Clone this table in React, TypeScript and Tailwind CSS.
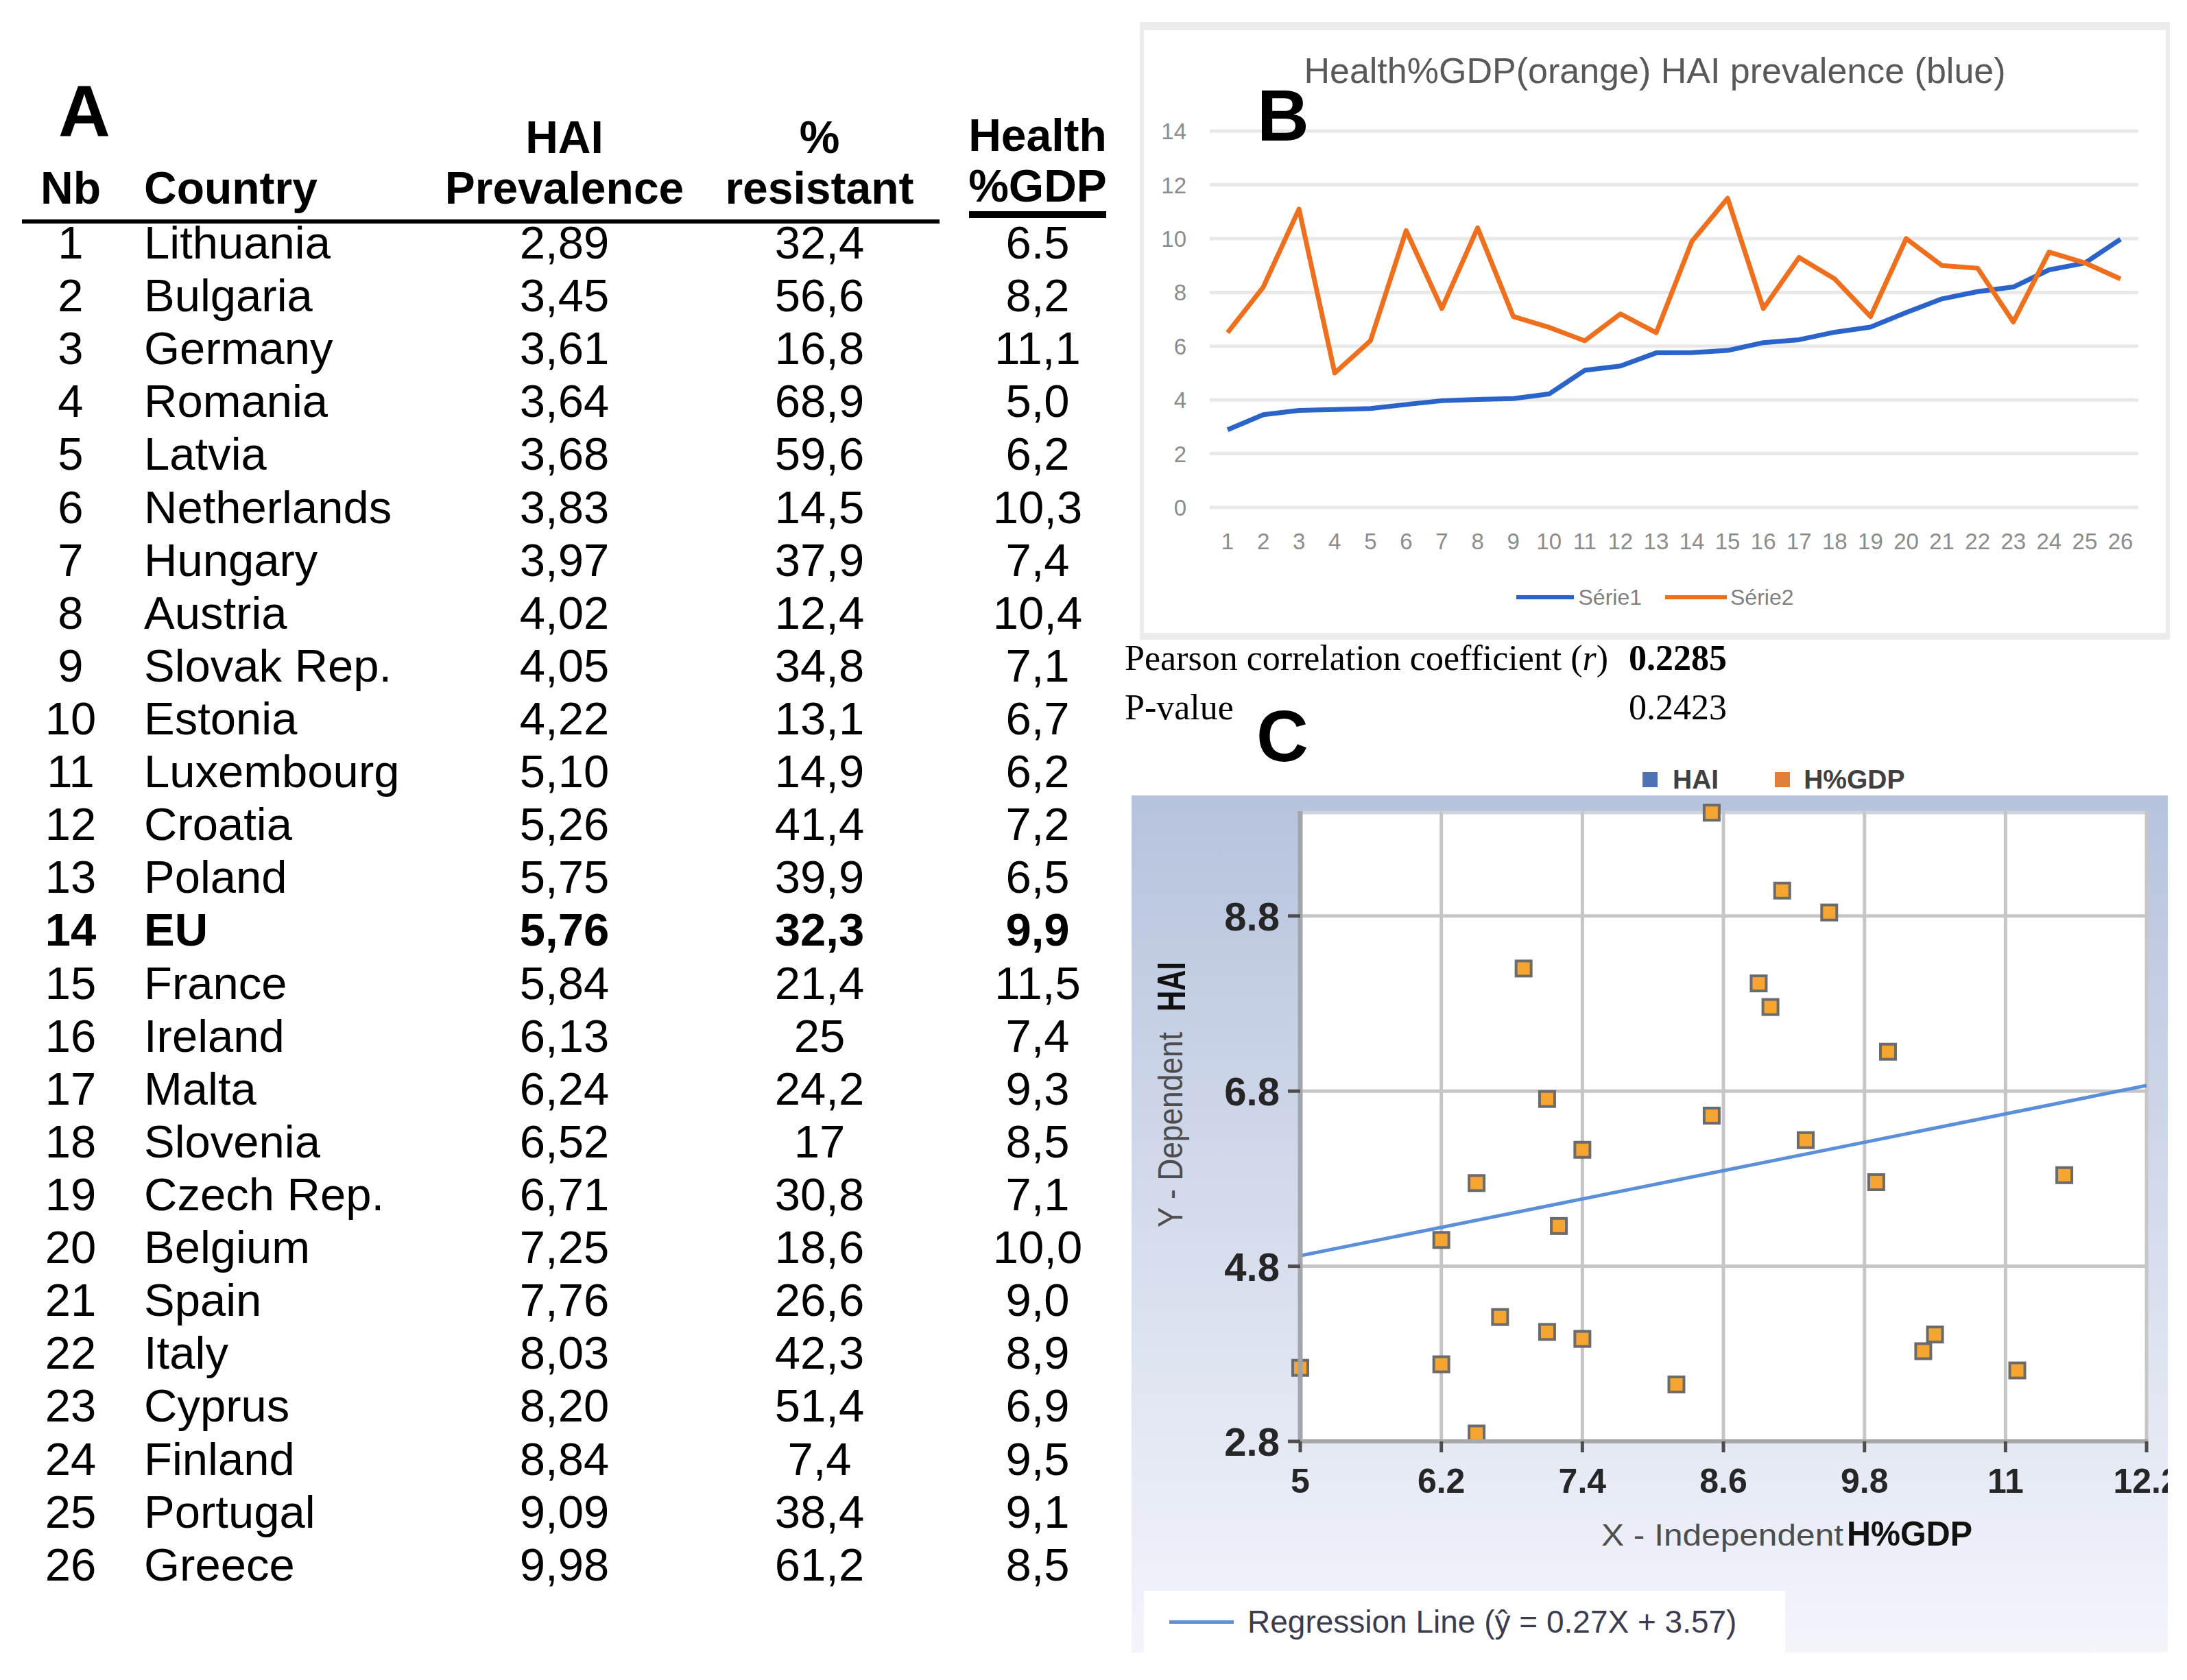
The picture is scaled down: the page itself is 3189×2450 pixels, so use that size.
import React from 'react';

type Row = [number, string, string, string, string];

const rows: Row[] = [
  [1, 'Lithuania', '2,89', '32,4', '6.5'],
  [2, 'Bulgaria', '3,45', '56,6', '8,2'],
  [3, 'Germany', '3,61', '16,8', '11,1'],
  [4, 'Romania', '3,64', '68,9', '5,0'],
  [5, 'Latvia', '3,68', '59,6', '6,2'],
  [6, 'Netherlands', '3,83', '14,5', '10,3'],
  [7, 'Hungary', '3,97', '37,9', '7,4'],
  [8, 'Austria', '4,02', '12,4', '10,4'],
  [9, 'Slovak Rep.', '4,05', '34,8', '7,1'],
  [10, 'Estonia', '4,22', '13,1', '6,7'],
  [11, 'Luxembourg', '5,10', '14,9', '6,2'],
  [12, 'Croatia', '5,26', '41,4', '7,2'],
  [13, 'Poland', '5,75', '39,9', '6,5'],
  [14, 'EU', '5,76', '32,3', '9,9'],
  [15, 'France', '5,84', '21,4', '11,5'],
  [16, 'Ireland', '6,13', '25', '7,4'],
  [17, 'Malta', '6,24', '24,2', '9,3'],
  [18, 'Slovenia', '6,52', '17', '8,5'],
  [19, 'Czech Rep.', '6,71', '30,8', '7,1'],
  [20, 'Belgium', '7,25', '18,6', '10,0'],
  [21, 'Spain', '7,76', '26,6', '9,0'],
  [22, 'Italy', '8,03', '42,3', '8,9'],
  [23, 'Cyprus', '8,20', '51,4', '6,9'],
  [24, 'Finland', '8,84', '7,4', '9,5'],
  [25, 'Portugal', '9,09', '38,4', '9,1'],
  [26, 'Greece', '9,98', '61,2', '8,5'],
];

const num = (s: string) => parseFloat(s.replace(',', '.'));

// chart B (page coordinates)
const bx = (i: number) => 1790 + i * 52.08;
const by = (v: number) => 739 - 39.2 * v;

// chart C (page coordinates)
const cx = (v: number) => 1896 + (v - 5) * 171.4;
const cy = (v: number) => 2102 - (v - 2.8) * 127.7;

const SANS = 'Liberation Sans, Arial, sans-serif';

const DataTable = () => (
  <div className="w-[1640px] shrink-0 pt-[110px] font-['Liberation_Sans',Arial,sans-serif] text-black">
    {/* Header */}
    <div className="flex items-end">
      <div className="ml-[32px] flex items-end border-b-[6px] border-black pr-[25px] pb-[9px] text-[66px] font-bold leading-[74px]">
        <div className="w-[142px]">
          <div className="mb-[22px] pl-[53px] text-[105px] leading-none">A</div>
          <div className="text-center">Nb</div>
        </div>
        <div className="w-[499px] pl-[36px]">Country</div>
        <div className="flex w-[300px] flex-col items-center">
          <div>HAI</div>
          <div>Prevalence</div>
        </div>
        <div className="ml-[72px] flex w-[300px] flex-col items-center">
          <div>%</div>
          <div>resistant</div>
        </div>
      </div>
      <div className="mb-[8px] ml-[43px] flex w-[200px] flex-col items-center border-b-[10px] border-black text-[66px] font-bold leading-[74px]">
        <div>Health</div>
        <div>%GDP</div>
      </div>
    </div>

    {/* Rows */}
    <div className="-mt-[11px]">
      {rows.map(([nb, country, hai, res, gdp]) => (
        <div
          key={nb}
          className={`ml-[32px] flex h-[77.12px] items-center text-[67px] leading-[77px] ${nb === 14 ? 'font-bold' : ''}`}
        >
          <div className="w-[142px] text-center">{nb}</div>
          <div className="w-[499px] pl-[36px]">{country}</div>
          <div className="w-[300px] text-center">{hai}</div>
          <div className="ml-[72px] w-[300px] text-center">{res}</div>
          <div className="ml-[68px] w-[200px] text-center">{gdp}</div>
        </div>
      ))}
    </div>
  </div>
);

const LineChart = () => {
  const grid = [0, 2, 4, 6, 8, 10, 12, 14];
  const blue = rows.map((r, i) => `${bx(i)},${by(num(r[2]))}`).join(' ');
  const orange = rows.map((r, i) => `${bx(i)},${by(num(r[4]))}`).join(' ');
  return (
    <svg width={1490} height={712} viewBox="1668 128 1490 712" className="block">
      {grid.map((v) => (
        <g key={v}>
          <line x1={1764} x2={3118} y1={by(v)} y2={by(v)} stroke="#e8e8e8" strokeWidth={5} />
          <text x={1730} y={by(v) + 12} textAnchor="end" fontSize={33} fill="#8c8c8c" fontFamily={SANS}>
            {v}
          </text>
        </g>
      ))}
      {rows.map((r, i) => (
        <text key={r[0]} x={bx(i)} y={800} textAnchor="middle" fontSize={33} fill="#8c8c8c" fontFamily={SANS}>
          {r[0]}
        </text>
      ))}
      <polyline points={blue} fill="none" stroke="#2a63c9" strokeWidth={7} strokeLinejoin="round" />
      <polyline points={orange} fill="none" stroke="#ef6f1c" strokeWidth={7} strokeLinejoin="round" />
    </svg>
  );
};

const ScatterChart = () => {
  const xs = [5, 6.2, 7.4, 8.6, 9.8, 11, 12.2];
  const ys = [2.8, 4.8, 6.8, 8.8];
  return (
    <svg width={1511} height={1160} viewBox="1650 1160 1511 1160" className="block">
      <rect x={1896} y={1183} width={1234} height={919} fill="#ffffff" />
      <line x1={1896} x2={3130} y1={1185} y2={1185} stroke="#cdd2dc" strokeWidth={5} />
      {xs.slice(1).map((v) => (
        <line key={v} x1={cx(v)} x2={cx(v)} y1={1183} y2={2102} stroke="#c6c6c6" strokeWidth={5} />
      ))}
      {ys.slice(1).map((v) => (
        <line key={v} x1={1896} x2={3130} y1={cy(v)} y2={cy(v)} stroke="#c6c6c6" strokeWidth={5} />
      ))}
      <line
        x1={cx(5)}
        y1={cy(0.27 * 5 + 3.57)}
        x2={cx(12.2)}
        y2={cy(0.27 * 12.2 + 3.57)}
        stroke="#5b8fd9"
        strokeWidth={5}
      />
      {rows.map((r) => (
        <rect
          key={r[0]}
          x={cx(num(r[4])) - 11}
          y={cy(num(r[2])) - 11}
          width={22}
          height={22}
          fill="#f6a531"
          stroke="#6b6b6b"
          strokeWidth={4}
        />
      ))}
      <line x1={1896} x2={1896} y1={1183} y2={2105} stroke="#a3a5ad" strokeWidth={7} />
      <line x1={1893} x2={3132} y1={2102} y2={2102} stroke="#a8a8a8" strokeWidth={6} />
      {ys.map((v) => (
        <g key={v}>
          <line x1={1878} x2={1896} y1={cy(v)} y2={cy(v)} stroke="#4d4d4d" strokeWidth={5} />
          <text x={1866} y={cy(v) + 21} textAnchor="end" fontSize={58} fontWeight={700} fill="#262626" fontFamily={SANS}>
            {v.toFixed(1)}
          </text>
        </g>
      ))}
      {xs.map((v) => (
        <g key={v}>
          <line x1={cx(v)} x2={cx(v)} y1={2102} y2={2118} stroke="#4d4d4d" strokeWidth={5} />
          <text x={cx(v)} y={2177} textAnchor="middle" fontSize={50} fontWeight={700} fill="#262626" fontFamily={SANS}>
            {v}
          </text>
        </g>
      ))}
      <text x={2335} y={2254} fontSize={44} fill="#4d4d4d" fontFamily={SANS} textLength={353} lengthAdjust="spacingAndGlyphs">
        X - Independent
      </text>
      <text x={2693} y={2254} fontSize={50} fontWeight={700} fill="#111111" fontFamily={SANS} textLength={183} lengthAdjust="spacingAndGlyphs">
        H%GDP
      </text>
      <text
        transform="translate(1724 1790) rotate(-90)"
        fontSize={50}
        fill="#4d4d4d"
        fontFamily={SANS}
        textLength={285}
        lengthAdjust="spacingAndGlyphs"
      >
        Y - Dependent
      </text>
      <text
        transform="translate(1728 1475) rotate(-90)"
        fontSize={58}
        fontWeight={700}
        fill="#111111"
        fontFamily={SANS}
        textLength={72}
        lengthAdjust="spacingAndGlyphs"
      >
        HAI
      </text>
    </svg>
  );
};

const App = () => {
  return (
    <div className="flex h-[2450px] w-[3189px] overflow-hidden bg-white">
      <DataTable />

      <div className="relative w-[1549px] shrink-0 font-['Liberation_Sans',Arial,sans-serif]">
        {/* Panel B */}
        <div className="relative ml-[22px] mt-[32px] h-[901px] w-[1502px] border-[6px] border-t-[12px] border-b-[10px] border-[#ebebeb]">
          <div className="pt-[33px] text-center text-[52px] leading-none text-[#595959]">
            Health%GDP(orange) HAI prevalence (blue)
          </div>
          <LineChart />
          <div className="mt-[10px] flex h-[40px] items-center justify-center text-[32px] text-[#7f7f7f]">
            <div className="h-[6px] w-[84px] bg-[#2a63c9]" />
            <span className="ml-[7px]">Série1</span>
            <div className="ml-[34px] h-[6px] w-[90px] bg-[#ef6f1c]" />
            <span className="ml-[5px]">Série2</span>
          </div>
          <div className="absolute left-[165px] top-[72px] text-[105px] font-bold leading-none text-black">B</div>
        </div>

        {/* Statistics */}
        <div className="mt-[1px] font-['Liberation_Serif','Times_New_Roman',serif] text-[52px] leading-[52px] text-black">
          <div className="flex">
            <div className="w-[735px]">
              Pearson correlation coefficient (<i>r</i>)
            </div>
            <div className="font-bold">0.2285</div>
          </div>
          <div className="mt-[20px] flex">
            <div className="w-[735px]">P-value</div>
            <div>0.2423</div>
          </div>
        </div>

        <div className="absolute left-[192px] top-[1021px] z-10 text-[105px] font-bold leading-none text-black">C</div>

        {/* Panel C legend */}
        <div className="mt-[59px] flex h-[40px] items-center pl-[755px] text-[39px] font-bold text-[#404040]">
          <div className="h-[22px] w-[22px] bg-[#4f72b3]" />
          <span className="ml-[22px]">HAI</span>
          <div className="ml-[82px] h-[22px] w-[22px] bg-[#e0803a]" />
          <span className="ml-[20px]">H%GDP</span>
        </div>

        {/* Panel C */}
        <div className="ml-[10px] mt-[3px] flex h-[1250px] w-[1511px] flex-col overflow-hidden bg-linear-to-b from-[#b6c3dd] to-[#f4f5fb]">
          <ScatterChart />
          <div className="ml-[18px] flex h-[90px] w-[935px] items-center bg-white pl-[37px]">
            <div className="h-[5px] w-[94px] bg-[#5b8fd9]" />
            <span className="ml-[20px] text-[46px] text-[#3c3c50]">Regression Line (ŷ = 0.27X + 3.57)</span>
          </div>
        </div>
      </div>
    </div>
  );
};

export default App;
